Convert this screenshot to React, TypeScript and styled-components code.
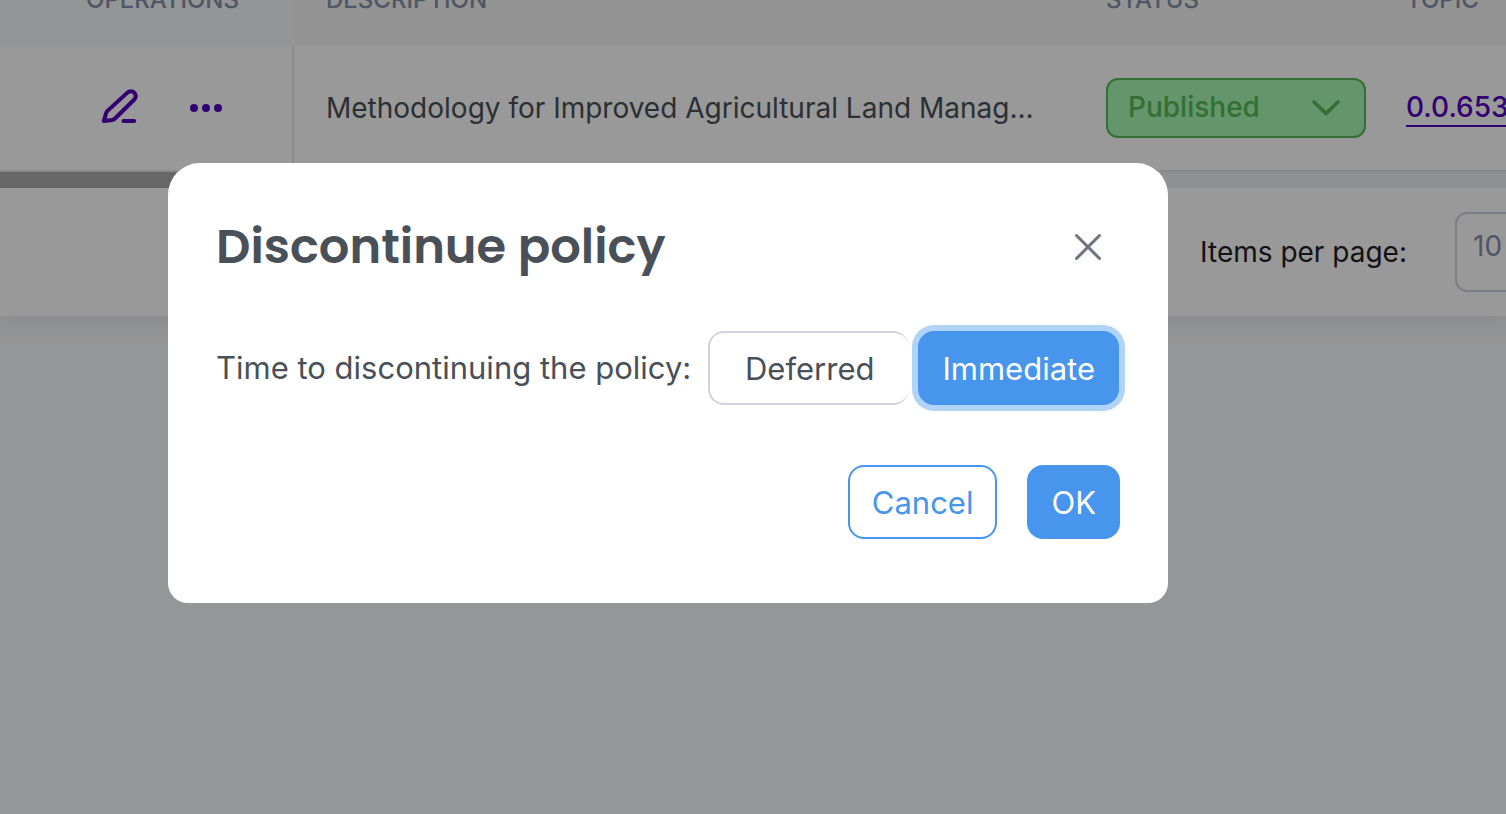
import React, { useState } from "react";
import styled, { createGlobalStyle, css } from "styled-components";

const GlobalStyle = createGlobalStyle`
  *, *::before, *::after { box-sizing: border-box; }
  body {
    margin: 0;
    overflow: hidden;
    background: #f9fafc;
    color: #495057;
    font-family: Inter, "Liberation Sans", sans-serif;
    font-size: 28px;
    line-height: 36px;
  }
  button, select { font-family: inherit; }
`;

const Page = styled.main`
  min-height: 100vh;
  overflow: hidden;
`;

const Card = styled.section`
  background: #ffffff;
  box-shadow: 0 -14px 28px 16px rgba(0, 0, 0, 0.1);
`;

const TableViewport = styled.div`
  overflow: hidden;
`;

const PolicyTable = styled.table`
  width: calc(100% + 168px);
  margin-top: -46px;
  table-layout: fixed;
  border-collapse: separate;
  border-spacing: 0;
`;

const HeadCell = styled.th<{ $pinned?: boolean; $width?: number }>`
  width: ${(p) => (p.$width ? `${p.$width}px` : "auto")};
  height: 92px;
  padding: 0 32px;
  background: ${(p) => (p.$pinned ? "#f6f9fc" : "#f7f7f7")};
  color: #848fa9;
  font-size: 24px;
  font-weight: 500;
  text-align: left;
  text-transform: uppercase;
  ${(p) => p.$pinned && css`padding-left: 86px;`}
`;

const Cell = styled.td<{ $pinned?: boolean }>`
  height: 126px;
  padding: 0 32px;
  border-bottom: 2px solid #e4e6e9;
  white-space: nowrap;
  ${(p) => p.$pinned && css`
    padding-left: 96px;
    border-right: 2px solid #e4e6e9;
  `}
`;

const Description = styled.div`
  overflow: hidden;
  text-overflow: ellipsis;
`;

const Actions = styled.div`
  display: flex;
  gap: 38px;
`;

const IconButton = styled.button`
  display: flex;
  align-items: center;
  justify-content: center;
  padding: 0;
  border: 0;
  background: none;
  color: #5500bf;
  cursor: pointer;
`;

const SelectBox = styled.div<{ $width: number }>`
  display: grid;
  width: ${(p) => p.$width}px;
  align-items: center;
  > * { grid-area: 1 / 1; }
  > svg {
    justify-self: end;
    margin-right: 24px;
    pointer-events: none;
    color: #55bb55;
  }
`;

const StatusSelect = styled.select`
  appearance: none;
  width: 100%;
  height: 60px;
  padding: 0 20px 2px;
  border: 2px solid #55bb55;
  border-radius: 12px;
  background: #a8f8b2;
  color: #55bb55;
  font-size: 28px;
  font-weight: 500;
`;

const TopicLink = styled.a`
  display: block;
  border-bottom: 2px solid currentColor;
  color: #5500bf;
  font-weight: 500;
  text-decoration: none;
`;

const ScrollTrack = styled.div`
  height: 16px;
  background: #eff0f3;
`;

const ScrollThumb = styled.div`
  width: 40%;
  height: 100%;
  background: #aaacab;
`;

const Paginator = styled.footer`
  display: flex;
  align-items: center;
  justify-content: flex-end;
  gap: 48px;
  height: 128px;
  margin-right: -109px;
  color: #202126;
`;

const PageSizeSelect = styled.select`
  appearance: none;
  width: 160px;
  height: 80px;
  padding: 0 16px 12px;
  border: 2px solid #ced4da;
  border-radius: 12px;
  background: #ffffff;
  color: #848fa9;
  font-size: 28px;
`;

const Overlay = styled.div`
  position: fixed;
  inset: 0;
  display: flex;
  align-items: center;
  justify-content: center;
  padding: 0 170px 48px 0;
  background: rgba(0, 0, 0, 0.4);
`;

const Dialog = styled.div`
  width: 100%;
  max-width: 1000px;
  padding: 48px 48px 64px;
  border-radius: 32px 32px 20px 20px;
  background: #ffffff;
  font-size: 31px;
`;

const DialogHeader = styled.header`
  display: flex;
  align-items: center;
  justify-content: space-between;
  height: 72px;
  margin-bottom: 48px;
`;

const Title = styled.h1`
  margin: 0;
  font-family: Poppins, Inter, sans-serif;
  font-size: 48px;
  font-weight: 600;
  line-height: 72px;
`;

const CloseButton = styled(IconButton)`
  width: 64px;
  height: 64px;
  color: #6c757d;
`;

const ChoiceRow = styled.div`
  display: flex;
  align-items: center;
  gap: 17px;
  line-height: 40px;
`;

const ButtonGroup = styled.div<{ $gap: number }>`
  display: flex;
  justify-content: flex-end;
  gap: ${(p) => p.$gap}px;
`;

const Button = styled.button<{ $filled?: boolean }>`
  height: 74px;
  padding: 0 22px;
  border: 2px solid #4895ed;
  border-radius: 16px;
  background: ${(p) => (p.$filled ? "#4895ed" : "#ffffff")};
  color: ${(p) => (p.$filled ? "#ffffff" : "#4895ed")};
  font-size: 31px;
  cursor: pointer;
`;

const ToggleButton = styled(Button)`
  width: 201px;
  padding: 0;
  ${(p) =>
    p.$filled
      ? css`box-shadow: 0 0 0 6px #b0d4f7;`
      : css`
          border-color: #ced4da;
          border-right: 0;
          color: #495057;
        `}
`;

const DialogFooter = styled.footer`
  margin-top: 60px;
`;

const PencilIcon = () => (
  <svg width="48" height="48" viewBox="0 0 48 48" fill="none" stroke="currentColor" strokeWidth="4" strokeLinecap="round" strokeLinejoin="round" aria-hidden="true">
    <path d="M7.8 37 10.2 28.9Q10.6 27.8 11.5 26.9L31.7 8.4a4.900 4.900 0 0 1 6.900 6.900L19 34.500Q18 35.500 16.600 35.900Z" />
    <path d="M27.500 37H38.200" />
  </svg>
);

const DotsIcon = () => (
  <svg width="48" height="48" viewBox="0 0 48 48" fill="currentColor" aria-hidden="true">
    <circle cx="12" cy="24" r="4" />
    <circle cx="24" cy="24" r="4" />
    <circle cx="36" cy="24" r="4" />
  </svg>
);

const ChevronIcon = () => (
  <svg width="32" height="20" viewBox="0 0 32 20" fill="none" stroke="currentColor" strokeWidth="3.6" strokeLinecap="round" strokeLinejoin="miter" aria-hidden="true">
    <path d="M4 4 16 15.500 28 4" />
  </svg>
);

const CloseIcon = () => (
  <svg width="28" height="28" viewBox="0 0 28 28" fill="none" stroke="currentColor" strokeWidth="3" strokeLinecap="round" aria-hidden="true">
    <path d="M2.500 2.500 25.500 25.500M25.500 2.500 2.500 25.500" />
  </svg>
);

type Timing = "Deferred" | "Immediate";
const timings: Timing[] = ["Deferred", "Immediate"];

export default function App() {
  const [timing, setTiming] = useState<Timing>("Immediate");

  return (
    <>
      <GlobalStyle />
      <Page>
        <Card>
          <TableViewport>
            <PolicyTable>
              <thead>
                <tr>
                  <HeadCell $pinned $width={294}>Operations</HeadCell>
                  <HeadCell>Description</HeadCell>
                  <HeadCell $width={300}>Status</HeadCell>
                  <HeadCell $width={300}>Topic</HeadCell>
                </tr>
              </thead>
              <tbody>
                <tr>
                  <Cell $pinned>
                    <Actions>
                      <IconButton aria-label="Edit"><PencilIcon /></IconButton>
                      <IconButton aria-label="More actions"><DotsIcon /></IconButton>
                    </Actions>
                  </Cell>
                  <Cell><Description>Methodology for Improved Agricultural Land Manag...</Description></Cell>
                  <Cell>
                    <SelectBox $width={260}>
                      <StatusSelect aria-label="Status"><option>Published</option></StatusSelect>
                      <ChevronIcon />
                    </SelectBox>
                  </Cell>
                  <Cell><TopicLink href="#topic">0.0.653</TopicLink></Cell>
                </tr>
              </tbody>
            </PolicyTable>
          </TableViewport>
          <ScrollTrack><ScrollThumb /></ScrollTrack>
          <Paginator>
            <label htmlFor="page-size">Items per page:</label>
            <PageSizeSelect id="page-size"><option>10</option></PageSizeSelect>
          </Paginator>
        </Card>
      </Page>
      <Overlay>
        <Dialog role="dialog" aria-modal="true" aria-labelledby="dialog-title">
          <DialogHeader>
            <Title id="dialog-title">Discontinue policy</Title>
            <CloseButton aria-label="Close"><CloseIcon /></CloseButton>
          </DialogHeader>
          <ChoiceRow>
            <span id="timing-label">Time to discontinuing the policy:</span>
            <ButtonGroup $gap={9} role="group" aria-labelledby="timing-label">
              {timings.map((t) => (
                <ToggleButton key={t} $filled={t === timing} aria-pressed={t === timing} onClick={() => setTiming(t)}>
                  {t}
                </ToggleButton>
              ))}
            </ButtonGroup>
          </ChoiceRow>
          <DialogFooter>
            <ButtonGroup $gap={30}>
              <Button>Cancel</Button>
              <Button $filled>OK</Button>
            </ButtonGroup>
          </DialogFooter>
        </Dialog>
      </Overlay>
    </>
  );
}
